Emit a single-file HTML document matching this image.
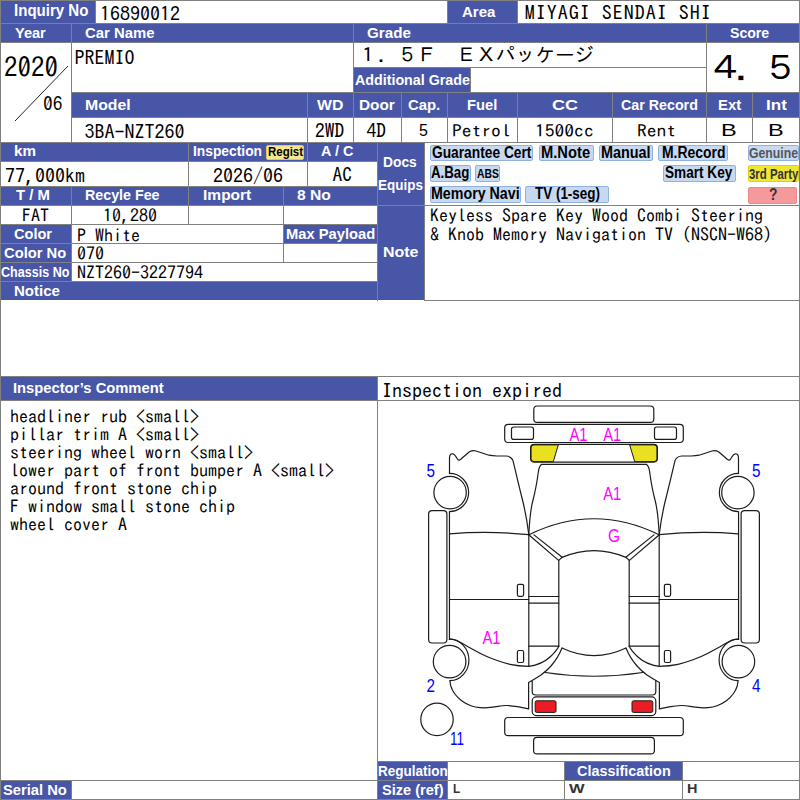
<!DOCTYPE html>
<html lang="en"><head><meta charset="utf-8"><title>Vehicle Inspection Sheet</title>
<style>
html,body{margin:0;padding:0}
body{width:800px;height:800px;position:relative;overflow:hidden;background:#fff}
.b{position:absolute;background:#4856a8}
.g{position:absolute;background:#808080}
.t{position:absolute;color:#fff;font-family:'Liberation Sans', sans-serif;font-weight:bold;white-space:nowrap;line-height:1;transform-origin:0 50%;display:inline-block}
.v{position:absolute;color:#000;font-family:"IPAGothic", "Liberation Mono", monospace;white-space:nowrap;line-height:1;transform-origin:0 50%;display:inline-block}
.tag{position:absolute;box-sizing:border-box;border:1px solid;border-radius:2px;font-family:'Liberation Sans', sans-serif;font-weight:bold;text-align:center;white-space:nowrap;overflow:visible}
.tag span{display:inline-block;transform-origin:50% 50%}
svg{position:absolute;left:0;top:0}
</style></head>
<body>
<div class="b" style="left:0px;top:0px;width:95px;height:23px"></div>
<div class="b" style="left:448px;top:0px;width:69px;height:23px"></div>
<div class="b" style="left:0px;top:24px;width:71px;height:18px"></div>
<div class="b" style="left:72px;top:24px;width:281px;height:18px"></div>
<div class="b" style="left:354px;top:24px;width:352px;height:18px"></div>
<div class="b" style="left:707px;top:24px;width:93px;height:18px"></div>
<div class="b" style="left:354px;top:68px;width:116px;height:24px"></div>
<div class="b" style="left:72px;top:93px;width:235px;height:24px"></div>
<div class="b" style="left:308px;top:93px;width:45px;height:24px"></div>
<div class="b" style="left:354px;top:93px;width:47px;height:24px"></div>
<div class="b" style="left:402px;top:93px;width:45px;height:24px"></div>
<div class="b" style="left:448px;top:93px;width:69px;height:24px"></div>
<div class="b" style="left:518px;top:93px;width:94px;height:24px"></div>
<div class="b" style="left:613px;top:93px;width:93px;height:24px"></div>
<div class="b" style="left:707px;top:93px;width:45px;height:24px"></div>
<div class="b" style="left:753px;top:93px;width:47px;height:24px"></div>
<div class="b" style="left:0px;top:143px;width:188px;height:18px"></div>
<div class="b" style="left:189px;top:143px;width:118px;height:18px"></div>
<div class="b" style="left:308px;top:143px;width:69px;height:18px"></div>
<div class="b" style="left:378px;top:143px;width:46px;height:62px"></div>
<div class="b" style="left:0px;top:187px;width:71px;height:18px"></div>
<div class="b" style="left:72px;top:187px;width:116px;height:18px"></div>
<div class="b" style="left:189px;top:187px;width:94px;height:18px"></div>
<div class="b" style="left:284px;top:187px;width:93px;height:18px"></div>
<div class="b" style="left:0px;top:225px;width:71px;height:18px"></div>
<div class="b" style="left:284px;top:225px;width:93px;height:18px"></div>
<div class="b" style="left:0px;top:244px;width:71px;height:18px"></div>
<div class="b" style="left:0px;top:263px;width:71px;height:18px"></div>
<div class="b" style="left:0px;top:282px;width:377px;height:18px"></div>
<div class="b" style="left:378px;top:206px;width:46px;height:94px"></div>
<div class="b" style="left:0px;top:377px;width:377px;height:23px"></div>
<div class="b" style="left:0px;top:781px;width:71px;height:19px"></div>
<div class="b" style="left:378px;top:762px;width:69px;height:18px"></div>
<div class="b" style="left:378px;top:781px;width:69px;height:19px"></div>
<div class="b" style="left:565px;top:762px;width:117px;height:18px"></div>
<div class="g" style="left:0px;top:0px;width:800px;height:1px"></div>
<div class="g" style="left:0px;top:23px;width:800px;height:1px"></div>
<div class="g" style="left:0px;top:42px;width:800px;height:1px"></div>
<div class="g" style="left:354px;top:67px;width:352px;height:1px"></div>
<div class="g" style="left:72px;top:92px;width:728px;height:1px"></div>
<div class="g" style="left:72px;top:117px;width:728px;height:1px"></div>
<div class="g" style="left:0px;top:142px;width:800px;height:1px"></div>
<div class="g" style="left:0px;top:161px;width:377px;height:1px"></div>
<div class="g" style="left:0px;top:186px;width:377px;height:1px"></div>
<div class="g" style="left:0px;top:205px;width:800px;height:1px"></div>
<div class="g" style="left:0px;top:224px;width:377px;height:1px"></div>
<div class="g" style="left:72px;top:243px;width:305px;height:1px"></div>
<div class="g" style="left:0px;top:243px;width:72px;height:1px"></div>
<div class="g" style="left:0px;top:262px;width:377px;height:1px"></div>
<div class="g" style="left:0px;top:281px;width:377px;height:1px"></div>
<div class="g" style="left:425px;top:300px;width:375px;height:1px"></div>
<div class="g" style="left:0px;top:376px;width:800px;height:1px"></div>
<div class="g" style="left:0px;top:400px;width:800px;height:1px"></div>
<div class="g" style="left:0px;top:780px;width:800px;height:1px"></div>
<div class="g" style="left:377px;top:761px;width:423px;height:1px"></div>
<div class="g" style="left:0px;top:799px;width:800px;height:1px"></div>
<div class="g" style="left:0px;top:0px;width:1px;height:800px"></div>
<div class="g" style="left:799px;top:0px;width:1px;height:800px"></div>
<div class="g" style="left:95px;top:0px;width:1px;height:23px"></div>
<div class="g" style="left:447px;top:0px;width:1px;height:23px"></div>
<div class="g" style="left:517px;top:0px;width:1px;height:23px"></div>
<div class="g" style="left:71px;top:24px;width:1px;height:119px"></div>
<div class="g" style="left:353px;top:24px;width:1px;height:119px"></div>
<div class="g" style="left:706px;top:24px;width:1px;height:119px"></div>
<div class="g" style="left:470px;top:68px;width:1px;height:24px"></div>
<div class="g" style="left:307px;top:93px;width:1px;height:94px"></div>
<div class="g" style="left:401px;top:93px;width:1px;height:50px"></div>
<div class="g" style="left:447px;top:93px;width:1px;height:50px"></div>
<div class="g" style="left:517px;top:93px;width:1px;height:50px"></div>
<div class="g" style="left:612px;top:93px;width:1px;height:50px"></div>
<div class="g" style="left:752px;top:93px;width:1px;height:50px"></div>
<div class="g" style="left:188px;top:143px;width:1px;height:82px"></div>
<div class="g" style="left:377px;top:143px;width:1px;height:158px"></div>
<div class="g" style="left:424px;top:143px;width:1px;height:158px"></div>
<div class="g" style="left:71px;top:187px;width:1px;height:95px"></div>
<div class="g" style="left:283px;top:187px;width:1px;height:76px"></div>
<div class="g" style="left:377px;top:377px;width:1px;height:423px"></div>
<div class="g" style="left:71px;top:781px;width:1px;height:19px"></div>
<div class="g" style="left:447px;top:762px;width:1px;height:38px"></div>
<div class="g" style="left:564px;top:762px;width:1px;height:38px"></div>
<div class="g" style="left:682px;top:762px;width:1px;height:38px"></div>
<span class="t" style="transform:scaleX(0.93);left:14.3px;top:2.4px;font-size:16.2px">Inquiry No</span>
<span class="t" style="transform:scaleX(0.97);left:461.8px;top:4.05px;font-size:15.5px">Area</span>
<span class="t" style="transform:scaleX(0.94);left:14.8px;top:24.75px;font-size:15.5px">Year</span>
<span class="t" style="transform:scaleX(0.96);left:85.05px;top:24.75px;font-size:15.5px">Car Name</span>
<span class="t" style="transform:scaleX(0.98);left:366.8px;top:24.75px;font-size:15.5px">Grade</span>
<span class="t" style="transform:scaleX(0.91);left:730.05px;top:24.75px;font-size:15.5px">Score</span>
<span class="t" style="transform:scaleX(0.92);left:355.05px;top:71.75px;font-size:15.5px">Additional Grade</span>
<span class="t" style="transform:scaleX(1.02);left:85.05px;top:96.75px;font-size:15.5px">Model</span>
<span class="t" style="transform:scaleX(1.02);left:317.3px;top:96.75px;font-size:15.5px">WD</span>
<span class="t" style="transform:scaleX(0.99);left:358.55px;top:96.75px;font-size:15.5px">Door</span>
<span class="t" style="transform:scaleX(0.96);left:408.05px;top:96.75px;font-size:15.5px">Cap.</span>
<span class="t" style="transform:scaleX(0.95);left:467.3px;top:96.75px;font-size:15.5px">Fuel</span>
<span class="t" style="transform:scaleX(1.16);left:551.8px;top:96.75px;font-size:15.5px">CC</span>
<span class="t" style="transform:scaleX(0.92);left:620.55px;top:96.75px;font-size:15.5px">Car Record</span>
<span class="t" style="transform:scaleX(0.96);left:717.55px;top:96.75px;font-size:15.5px">Ext</span>
<span class="t" style="transform:scaleX(1.1);left:766.05px;top:96.75px;font-size:15.5px">Int</span>
<span class="t" style="transform:scaleX(0.98);left:13.8px;top:143.45px;font-size:15.5px">km</span>
<span class="t" style="transform:scaleX(0.89);left:192.8px;top:143.45px;font-size:15.5px">Inspection</span>
<span class="t" style="transform:scaleX(0.93);left:321.05px;top:143.45px;font-size:15.5px">A / C</span>
<span class="t" style="transform:scaleX(0.89);left:383.1px;top:153.95px;font-size:15.5px">Docs</span>
<span class="t" style="transform:scaleX(0.87);left:377.8px;top:176.55px;font-size:15.5px">Equips</span>
<span class="t" style="transform:scaleX(0.96);left:15.55px;top:187.25px;font-size:15.5px">T / M</span>
<span class="t" style="transform:scaleX(0.92);left:85.05px;top:187.25px;font-size:15.5px">Recyle Fee</span>
<span class="t" style="transform:scaleX(1);left:203.05px;top:187.25px;font-size:15.5px">Import</span>
<span class="t" style="transform:scaleX(1.01);left:296.8px;top:187.25px;font-size:15.5px">8 No</span>
<span class="t" style="transform:scaleX(0.94);left:13.8px;top:226.35px;font-size:15.5px">Color</span>
<span class="t" style="transform:scaleX(0.95);left:285.55px;top:226.35px;font-size:15.5px">Max Payload</span>
<span class="t" style="transform:scaleX(0.95);left:4.3px;top:245.35px;font-size:15.5px">Color No</span>
<span class="t" style="transform:scaleX(0.81);left:0.8px;top:264.35px;font-size:15.5px">Chassis No</span>
<span class="t" style="transform:scaleX(0.97);left:13.8px;top:283.35px;font-size:15.5px">Notice</span>
<span class="t" style="transform:scaleX(1.03);left:382.5px;top:244.45px;font-size:15.5px">Note</span>
<span class="t" style="transform:scaleX(0.95);left:13.05px;top:380.25px;font-size:15.5px">Inspector’s Comment</span>
<span class="t" style="transform:scaleX(0.95);left:3.3px;top:782.25px;font-size:15.5px">Serial No</span>
<span class="t" style="transform:scaleX(0.87);left:378.05px;top:762.75px;font-size:15.5px">Regulation</span>
<span class="t" style="transform:scaleX(0.94);left:381.8px;top:782.25px;font-size:15.5px">Size (ref)</span>
<span class="t" style="transform:scaleX(0.93);left:576.9px;top:762.75px;font-size:15.5px">Classification</span>
<div class="tag" style="left:429.5px;top:144.5px;width:103.75px;height:16.75px;background:#c6d9f1;border-color:#8fb2e0"></div>
<span class="t" style="transform:scaleX(0.86);left:432.05px;top:144.57px;font-size:16px;color:#000">Guarantee Cert</span>
<div class="tag" style="left:538.5px;top:144.5px;width:55.5px;height:16.75px;background:#c6d9f1;border-color:#8fb2e0"></div>
<span class="t" style="transform:scaleX(0.92);left:541.3px;top:144.57px;font-size:16px;color:#000">M.Note</span>
<div class="tag" style="left:598.6px;top:144.5px;width:54.4px;height:16.75px;background:#c6d9f1;border-color:#8fb2e0"></div>
<span class="t" style="transform:scaleX(0.9);left:601.1px;top:144.57px;font-size:16px;color:#000">Manual</span>
<div class="tag" style="left:658.2px;top:144.5px;width:69.6px;height:16.75px;background:#c6d9f1;border-color:#8fb2e0"></div>
<span class="t" style="transform:scaleX(0.87);left:661.5px;top:144.57px;font-size:16px;color:#000">M.Record</span>
<div class="tag" style="left:747.5px;top:144.5px;width:51.5px;height:16.75px;background:#c6d9f1;border-color:#8fb2e0"></div>
<span class="t" style="transform:scaleX(0.79);left:748.9px;top:144.82px;font-size:15.5px;color:#555">Genuine</span>
<div class="tag" style="left:429.5px;top:165.2px;width:41.25px;height:16.8px;background:#c6d9f1;border-color:#8fb2e0"></div>
<span class="t" style="transform:scaleX(0.83);left:431.3px;top:165.3px;font-size:16px;color:#000">A.Bag</span>
<div class="tag" style="left:475.25px;top:165.2px;width:24.5px;height:16.8px;background:#c6d9f1;border-color:#8fb2e0"></div>
<span class="t" style="transform:scaleX(0.83);left:477.05px;top:167.95px;font-size:12.5px;color:#000">ABS</span>
<div class="tag" style="left:662.7px;top:165.2px;width:73.0px;height:16.8px;background:#c6d9f1;border-color:#8fb2e0"></div>
<span class="t" style="transform:scaleX(0.85);left:665.3px;top:165.3px;font-size:16px;color:#000">Smart Key</span>
<div class="tag" style="left:747.5px;top:165.2px;width:51.1px;height:16.8px;background:#f0e636;border-color:#ddd020"></div>
<span class="t" style="transform:scaleX(0.76);left:748.6px;top:165.8px;font-size:15px;color:#333">3rd Party</span>
<div class="tag" style="left:429.5px;top:186.25px;width:91.25px;height:16.5px;background:#c6d9f1;border-color:#8fb2e0"></div>
<span class="t" style="transform:scaleX(0.89);left:431.3px;top:186.2px;font-size:16px;color:#000">Memory Navi</span>
<div class="tag" style="left:525.25px;top:186.25px;width:83.25px;height:16.5px;background:#c6d9f1;border-color:#8fb2e0"></div>
<span class="t" style="transform:scaleX(0.84);left:534.55px;top:186.2px;font-size:16px;color:#000">TV (1-seg)</span>
<div class="tag" style="left:748.3px;top:186.5px;width:49.0px;height:17.3px;background:#f49a9a;border-color:#ee8a8a"></div>
<span class="t" style="transform:scaleX(0.86);left:768.8px;top:186.85px;font-size:16px;color:#333">?</span>
<div class="tag" style="left:265.5px;top:144.5px;width:38.75px;height:15.0px;background:#f5e88a;border-color:#d8c860"></div>
<span class="t" style="transform:scaleX(0.85);left:267.55px;top:144.95px;font-size:13.5px;color:#000">Regist</span>
<span class="t" style="transform:scaleX(0.9);left:453.05px;top:782.2px;font-size:13px;color:#333">L</span>
<span class="t" style="transform:scaleX(1.27);left:569.3px;top:782.2px;font-size:13px;color:#333">W</span>
<span class="t" style="transform:scaleX(1.11);left:687.3px;top:782.2px;font-size:13px;color:#333">H</span>
<span class="v" style="left:100px;top:3.0px;font-size:20px;">16890012</span>
<span class="v" style="left:524.8px;top:2.4px;font-size:20px;letter-spacing:1px">MIYAGI SENDAI SHI</span>
<span class="v" style="left:4px;top:52.5px;font-size:27px;">2020</span>
<span class="v" style="left:43px;top:94.25px;font-size:19.5px;">06</span>
<span class="v" style="left:74.5px;top:46.5px;font-size:20px;">PREMIO</span>
<span class="v" style="left:358px;top:45.15px;font-size:19.7px;">１．５Ｆ　ＥＸパッケージ</span>
<span class="v" style="left:707.5px;top:50.8px;font-size:33px;letter-spacing:-8.9px;transform:scaleX(1.12)">４．５</span>
<span class="v" style="left:84.5px;top:120.5px;font-size:20px;">3BA-NZT260</span>
<span class="v" style="left:315px;top:120.75px;font-size:19.5px;">2WD</span>
<span class="v" style="left:366.5px;top:120.75px;font-size:19.5px;">4D</span>
<span class="v" style="left:5px;top:164.5px;font-size:20px;">77,000km</span>
<span class="v" style="left:213px;top:164.5px;font-size:20px;">2026/06</span>
<span class="v" style="left:332.5px;top:164.75px;font-size:19.5px;">AC</span>
<span class="v" style="left:22px;top:206.0px;font-size:18px;">FAT</span>
<span class="v" style="left:103px;top:206.0px;font-size:18px;">10,280</span>
<span class="v" style="left:77px;top:225.5px;font-size:18px;">P White</span>
<span class="v" style="left:77px;top:244.0px;font-size:18px;">070</span>
<span class="v" style="left:77px;top:263.0px;font-size:18px;">NZT260-3227794</span>
<span class="v" style="left:382px;top:379.5px;font-size:20px;">Inspection expired</span>
<span class="v" style="left:419px;top:122.5px;font-size:16px;font-family:'Liberation Sans', sans-serif;transform:scaleX(1.0)">5</span>
<span class="v" style="left:452.3px;top:122.0px;font-size:17px;font-family:'IPAGothic', 'Liberation Mono', monospace;transform:scaleX(1.15)">Petrol</span>
<span class="v" style="left:534.6px;top:122.0px;font-size:17px;font-family:'IPAGothic', 'Liberation Mono', monospace;transform:scaleX(1.15)">1500cc</span>
<span class="v" style="left:637.3px;top:122.0px;font-size:17px;font-family:'IPAGothic', 'Liberation Mono', monospace;transform:scaleX(1.15)">Rent</span>
<span class="v" style="left:721.0px;top:123.2px;font-size:16.6px;font-family:'Liberation Sans', sans-serif;transform:scaleX(1.42)">B</span>
<span class="v" style="left:768.4px;top:123.2px;font-size:16.6px;font-family:'Liberation Sans', sans-serif;transform:scaleX(1.42)">B</span>
<div class="v" style="left:430px;top:206px;font-size:18px;line-height:18.6px;white-space:pre">Keyless Spare Key Wood Combi Steering
&amp; Knob Memory Navigation TV (NSCN-W68)</div>
<div class="v" style="left:10px;top:407px;font-size:18px;line-height:18px;white-space:pre">headliner rub &lt;small&gt;
pillar trim A &lt;small&gt;
steering wheel worn &lt;small&gt;
lower part of front bumper A &lt;small&gt;
around front stone chip
F window small stone chip
wheel cover A</div>
<svg width="72" height="100" style="left:0;top:43px"><path d="M68 23 L15 78" stroke="#222" stroke-width="1" fill="none"/></svg>
<svg width="800" height="800" viewBox="0 0 800 800">
<g fill="none" stroke="#1c1c1c" stroke-width="1.2" stroke-linejoin="round" stroke-linecap="round">
<!-- centre pieces -->
<rect x="533.8" y="406" width="120" height="16.4" rx="3.5"/>
<rect x="504.7" y="424.4" width="178.6" height="18.1" rx="3.5"/>
<rect x="530.6" y="444.4" width="126.8" height="17.7" rx="3.5"/>
<path d="M541.5 464.4 H646.5"/>
<path d="M529 534.7 Q594 502.8 659 534.7"/>
<path d="M562 557.4 Q594 543.8 626 557.4"/>
<path d="M562 648 Q594 663.2 626 648"/>
<path d="M545.3 672.5 Q594 680 642.7 672.5"/>
<path d="M532.2 681 V691.5 Q532.2 695 535.7 695 H652.3 Q655.8 695 655.8 691.5 V681"/>
<rect x="532.2" y="696.9" width="123.6" height="18.7" rx="4"/>
<rect x="504.7" y="717.5" width="178.6" height="18.2" rx="3.5"/>
<rect x="533.6" y="737.3" width="120.8" height="16.6" rx="3.5"/>
<g>
<rect x="511.5" y="427" width="22" height="12.4" rx="2.2"/>
<path d="M449.5 473.6 V458 Q449.6 453.4 452.8 453.8 Q454.6 454 456 456.8 Q457.6 460 458.8 460.2 Q459.8 460.2 463 457.2 L469.5 451.8 Q472.5 450 476 451 L489 455.2 Q492 456 497 456 H506 Q511.5 456.3 513 460.6 Q518.5 484 522.5 500 T528.8 534.7"/>
<path d="M541.5 464.4 Q539.2 466 538.5 471 Q536 489 533 500 T528.8 534.7"/>
<circle cx="450.1" cy="492.6" r="16.2"/>
<path d="M449.45 473.4 A19.2 19.1 0 1 1 449.45 511.6 V639.2"/>
<rect x="428.6" y="510.6" width="18.3" height="132.4" rx="3.5"/>
<path d="M449.6 533.8 Q489 530.6 528.8 534.7"/>
<path d="M528.8 534.7 V666.5"/>
<path d="M529 535 L558.6 560.4 M534 534.9 L562.2 557.3 L558.6 560.4"/>
<path d="M558.8 560.4 V646.2"/>
<path d="M449.6 599.5 H528.8"/>
<path d="M528.8 596.5 H558.8 M528.8 603.2 H558.8 M528.8 646.2 H558.8"/>
<rect x="517.4" y="584.3" width="6.2" height="12" rx="1.5"/>
<rect x="517.4" y="650.5" width="6.2" height="12" rx="1.5"/>
<circle cx="449.6" cy="661.6" r="16.3"/>
<path d="M449.4 639.2 A19.2 20.75 0 1 1 450 680.7"/>
<path d="M449.4 639.2 Q453 639.2 456 640.3 Q462 643 468 646.7 L480 653.3 Q487 657 495 659.8 Q503 662.7 510 664.3 Q518 666 528.8 666.4 Q542 664.5 550 657 Q556.5 651 558.8 646.2"/>
<path d="M562 648 Q558 658 551 666 Q546 671.5 541 675 Q535 679 528.6 682.5 V708.6"/>
<path d="M450 680.7 Q450.3 684 450.8 686 Q452 690 454.5 693.5 Q457.5 697.8 462 701 Q466 704 471 705.8 Q475 707.3 480 707.7 Q484 708 487.5 707.7 Q493 707.2 498 706.3 Q503 705.4 507 705.5 Q512 705.7 517.5 706.7 L528.7 708.8"/>
</g>
<g transform="translate(1188 0) scale(-1 1)">
<rect x="511.5" y="427" width="22" height="12.4" rx="2.2"/>
<path d="M449.5 473.6 V458 Q449.6 453.4 452.8 453.8 Q454.6 454 456 456.8 Q457.6 460 458.8 460.2 Q459.8 460.2 463 457.2 L469.5 451.8 Q472.5 450 476 451 L489 455.2 Q492 456 497 456 H506 Q511.5 456.3 513 460.6 Q518.5 484 522.5 500 T528.8 534.7"/>
<path d="M541.5 464.4 Q539.2 466 538.5 471 Q536 489 533 500 T528.8 534.7"/>
<circle cx="450.1" cy="492.6" r="16.2"/>
<path d="M449.45 473.4 A19.2 19.1 0 1 1 449.45 511.6 V639.2"/>
<rect x="428.6" y="510.6" width="18.3" height="132.4" rx="3.5"/>
<path d="M449.6 533.8 Q489 530.6 528.8 534.7"/>
<path d="M528.8 534.7 V666.5"/>
<path d="M529 535 L558.6 560.4 M534 534.9 L562.2 557.3 L558.6 560.4"/>
<path d="M558.8 560.4 V646.2"/>
<path d="M449.6 599.5 H528.8"/>
<path d="M528.8 596.5 H558.8 M528.8 603.2 H558.8 M528.8 646.2 H558.8"/>
<rect x="517.4" y="584.3" width="6.2" height="12" rx="1.5"/>
<rect x="517.4" y="650.5" width="6.2" height="12" rx="1.5"/>
<circle cx="449.6" cy="661.6" r="16.3"/>
<path d="M449.4 639.2 A19.2 20.75 0 1 1 450 680.7"/>
<path d="M449.4 639.2 Q453 639.2 456 640.3 Q462 643 468 646.7 L480 653.3 Q487 657 495 659.8 Q503 662.7 510 664.3 Q518 666 528.8 666.4 Q542 664.5 550 657 Q556.5 651 558.8 646.2"/>
<path d="M562 648 Q558 658 551 666 Q546 671.5 541 675 Q535 679 528.6 682.5 V708.6"/>
<path d="M450 680.7 Q450.3 684 450.8 686 Q452 690 454.5 693.5 Q457.5 697.8 462 701 Q466 704 471 705.8 Q475 707.3 480 707.7 Q484 708 487.5 707.7 Q493 707.2 498 706.3 Q503 705.4 507 705.5 Q512 705.7 517.5 706.7 L528.7 708.8"/>
</g>
</g>
<!-- lamps -->
<path d="M534 444.9 H558.3 L553.3 461.6 H534 Q531.1 461.6 531.1 458.6 V447.9 Q531.1 444.9 534 444.9Z" fill="#e8e020" stroke="#1c1c1c" stroke-width="1"/>
<path d="M654 444.9 H629.7 L634.7 461.6 H654 Q656.9 461.6 656.9 458.6 V447.9 Q656.9 444.9 654 444.9Z" fill="#e8e020" stroke="#1c1c1c" stroke-width="1"/>
<rect x="535.2" y="700.8" width="20.8" height="11.6" rx="1.5" fill="#ec1c24" stroke="#1c1c1c" stroke-width="1"/>
<rect x="632" y="700.8" width="20.8" height="11.6" rx="1.5" fill="#ec1c24" stroke="#1c1c1c" stroke-width="1"/>
<circle cx="437" cy="719.4" r="16.2" fill="none" stroke="#1c1c1c" stroke-width="1.2"/>
<!-- labels -->
<g font-family="'Liberation Sans', sans-serif" font-size="19.2" fill="#ff00ff">
<text x="569.5" y="440.9" textLength="18" lengthAdjust="spacingAndGlyphs">A1</text>
<text x="603.3" y="440.9" textLength="18" lengthAdjust="spacingAndGlyphs">A1</text>
<text x="603.3" y="499.8" textLength="18" lengthAdjust="spacingAndGlyphs">A1</text>
<text x="608" y="541.9" textLength="12" lengthAdjust="spacingAndGlyphs">G</text>
<text x="482.5" y="644.3" textLength="18" lengthAdjust="spacingAndGlyphs">A1</text>
</g>
<g font-family="'Liberation Sans', sans-serif" font-size="18.5" fill="#0000ff">
<text x="426.5" y="476.6" textLength="8.5" lengthAdjust="spacingAndGlyphs">5</text>
<text x="752" y="476.6" textLength="8.5" lengthAdjust="spacingAndGlyphs">5</text>
<text x="426.5" y="692.4" textLength="8.5" lengthAdjust="spacingAndGlyphs">2</text>
<text x="752" y="692.4" textLength="8.5" lengthAdjust="spacingAndGlyphs">4</text>
<text x="450" y="745.3" textLength="14" lengthAdjust="spacingAndGlyphs">11</text>
</g>
</svg>

</body></html>
